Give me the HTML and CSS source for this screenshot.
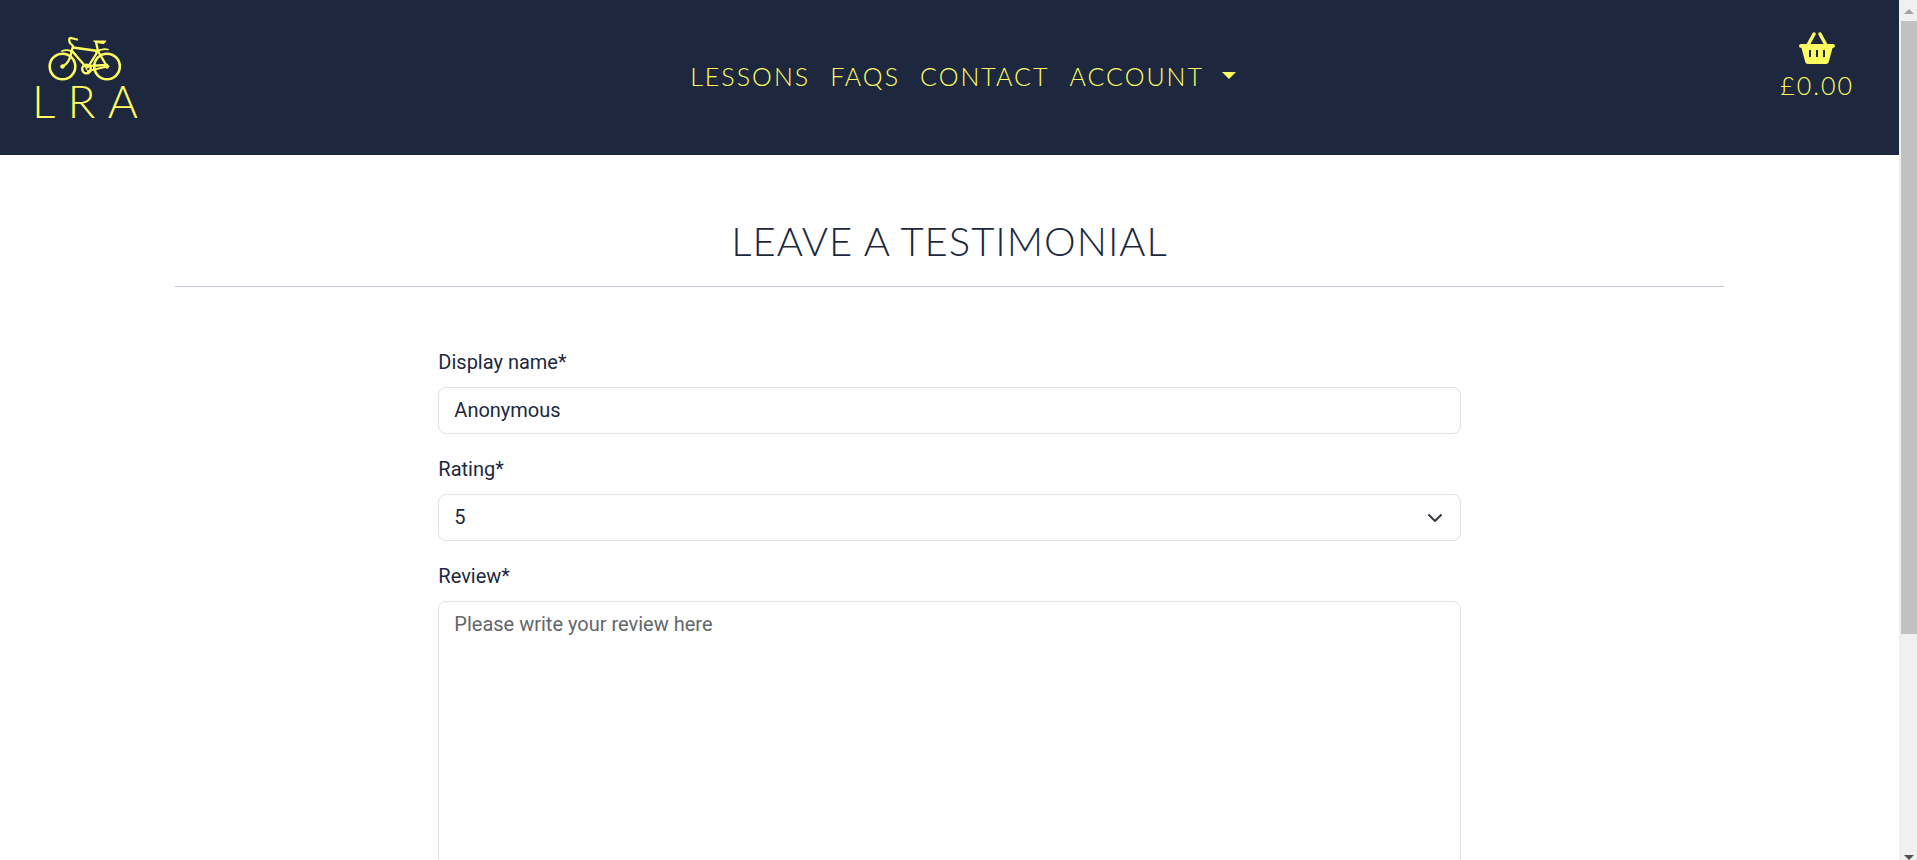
FILE: index.html
```html
<!DOCTYPE html>
<html lang="en">
<head>
<meta charset="utf-8">
<meta name="viewport" content="width=device-width, initial-scale=1">
<title>Leave a testimonial</title>
<link rel="stylesheet" href="styles.css">
</head>
<body>
<div class="page">
  <header class="header">
    <a class="logo" href="#" aria-label="LRA home">
      <svg class="logo-bike" viewBox="0 0 74 46" fill="none" stroke="currentColor" stroke-linecap="round" stroke-linejoin="round">
        <g stroke-width="2.6">
          <circle cx="14.500" cy="30.500" r="12.800"/>
          <circle cx="59" cy="30.500" r="12.800"/>
        </g>
        <g stroke-width="2.3">
          <path d="M14.500 30.500C20 28 22 23 24 14"/>
          <path d="M25 11.500L50 15M24 15L38 31"/>
          <path d="M48 6L50 15L40 31M50 15L59 30.500L40 35"/>
          <path d="M40 30L59 29"/>
          <path d="M24 14L25 10L22 7Q20 2 23 2L29 3.500"/>
        </g>
        <path d="M14 15Q22 12 28 19M48 16Q54 12 60 13.500" stroke-width="1.800"/>
        <path d="M46 5H58L56 7.500Q51 7 49 6.500Z" fill="currentColor" stroke-width="1"/>
        <circle cx="38.500" cy="33" r="4.300" stroke-width="2.400"/>
        <circle cx="38.500" cy="33" r="1" fill="currentColor" stroke="none"/>
        <circle cx="14.500" cy="30.500" r="1.800" fill="currentColor"/>
        <circle cx="59" cy="30.500" r="1.800" fill="currentColor"/>
      </svg>
      <span class="logo-text"><span>L</span><span>R</span><span>A</span></span>
    </a>
    <nav class="nav">
      <a href="#">LESSONS</a>
      <a href="#">FAQS</a>
      <a href="#">CONTACT</a>
      <button class="nav-menu" type="button">ACCOUNT<span class="caret"></span></button>
    </nav>
    <a class="basket" href="#">
      <svg class="basket-icon" viewBox="0 0 36 32" aria-hidden="true">
        <path d="M9 13L15 2M27 13L21 2" fill="none" stroke="currentColor" stroke-width="3.400" stroke-linecap="round"/>
        <path fill="currentColor" fill-rule="evenodd" d="M2 12H34Q36 12 36 14Q36 16 33.500 16L30 29Q29.500 32 27 32H9Q6.500 32 6 29L2.500 16Q0 16 0 14Q0 12 2 12ZM10 18V25H12V18ZM17 18V25H19V18ZM24 18V25H26V18Z"/>
      </svg>
      <span>£0.00</span>
    </a>
  </header>
  <main class="main">
    <h1 class="title">LEAVE A TESTIMONIAL</h1>
    <form class="form">
      <label for="name">Display name*</label>
      <input class="control" id="name" type="text" value="Anonymous">
      <label for="rating">Rating*</label>
      <select class="control select" id="rating"><option>5</option><option>4</option><option>3</option><option>2</option><option>1</option></select>
      <label for="review">Review*</label>
      <textarea class="control" id="review" rows="10" placeholder="Please write your review here"></textarea>
    </form>
  </main>
</div>
<div class="scrollbar" aria-hidden="true">
  <span class="arrow arrow-up"></span>
  <span class="thumb"></span>
  <span class="arrow arrow-down"></span>
</div>
</body>
</html>
```
FILE: styles.css
```css
* { box-sizing: border-box; }

body {
  display: flex;
  height: 100vh;
  margin: 0;
  overflow: hidden;
  background: #fff;
  color: #1d283f;
  font: 20px/30px Roboto, sans-serif;
}

.page {
  flex: 1;
  min-width: 0;
  overflow: hidden;
}

.header {
  display: grid;
  grid-template-columns: auto 1fr auto;
  align-items: center;
  padding: 30px 45px 30px 34px;
  background: #1d283f;
  color: #ffff61;
  font-family: Lato, sans-serif;
  font-size: 25px;
  font-weight: 300;
  letter-spacing: 2px;
}

.header a { color: inherit; text-decoration: none; }

.logo {
  display: flex;
  flex-direction: column;
  align-items: center;
  width: 102px;
  height: 95px;
  padding-top: 6px;
}

.logo-bike { width: 74px; height: 46px; }

.logo-text {
  display: flex;
  justify-content: space-between;
  width: 106px;
  font-size: 46px;
  line-height: 38px;
  letter-spacing: 0;
}

.nav {
  display: flex;
  justify-content: center;
  gap: 20px;
  padding: 0 0 4px 10px;
}

.nav-menu {
  display: flex;
  align-items: center;
  gap: 18px;
  padding: 0;
  border: 0;
  background: none;
  color: inherit;
  font: inherit;
  letter-spacing: inherit;
}

.caret {
  border: 7px solid transparent;
  border-top-color: currentColor;
  border-bottom: 0;
}

.basket {
  display: flex;
  flex-direction: column;
  align-items: center;
  align-self: start;
  gap: 6px;
  padding-top: 2px;
}

.basket-icon { width: 36px; height: 32px; }

.main {
  width: calc(100% - 350px);
  margin: 0 auto;
}

.title {
  margin: 0 0 60px;
  padding: 62px 0 21px;
  border-bottom: 1px solid #c3c6d2;
  font: 300 40px/48px Lato, sans-serif;
  letter-spacing: 1px;
  text-align: center;
}

.form {
  display: flex;
  flex-direction: column;
  width: 66%;
  margin: 0 auto;
}

.form label { margin-bottom: 10px; }

.control {
  width: 100%;
  margin: 0 0 20px;
  padding: 7px 15px 8px;
  border: 1px solid #dee2e6;
  border-radius: 8px;
  background: #fff;
  color: inherit;
  font: inherit;
  resize: none;
}

.control::placeholder { color: #63666a; opacity: 1; }

.select {
  appearance: none;
  background: url("data:image/svg+xml,%3Csvg xmlns='http://www.w3.org/2000/svg' viewBox='0 0 16 16'%3E%3Cpath fill='none' stroke='%23343a40' stroke-linecap='round' stroke-linejoin='round' stroke-width='2' d='m2 5 6 6 6-6'/%3E%3C/svg%3E") no-repeat right 17px center / 16px 16px;
}

.scrollbar {
  display: flex;
  flex-direction: column;
  align-items: center;
  width: 18px;
  padding: 9px 0 0 2px;
  background: #f0f0f0;
}

.thumb {
  width: 100%;
  height: 72%;
  margin: 7px 0 auto;
  background: #c1c1c1;
}

.arrow { border: 5px solid transparent; }
.arrow-up { border-top: 0; border-bottom-color: #a3a3a3; }
.arrow-down { border-bottom: 0; border-top-color: #505050; }
```
